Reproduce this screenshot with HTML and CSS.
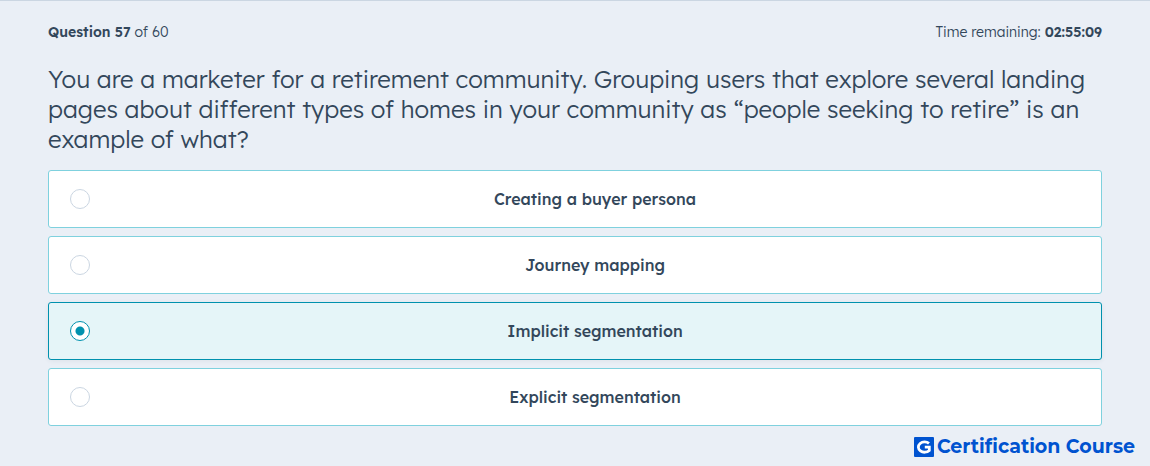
FILE: index.html
```html
<!DOCTYPE html>
<html lang="en">
	<head>
		<meta charset="UTF-8">
		<meta name="viewport" content="width=device-width, initial-scale=1.0">
		<title>Question 57 of 60</title>
		<link rel="stylesheet" href="styles.css">
	</head>
	<body>
		<form class="quiz">
			<header class="quiz-status">
				<div><strong>Question 57</strong> of 60</div>
				<div>Time remaining: <strong>02:55:09</strong></div>
			</header>

			<fieldset class="question">
				<legend class="question-text">You are a marketer for a retirement community. Grouping users that explore several landing pages about different types of homes in your community as “people seeking to retire” is an example of what?</legend>

				<div class="answers">
					<label class="answer">
						<input type="radio" name="answer" value="persona">
						<span>Creating a buyer persona</span>
					</label>
					<label class="answer">
						<input type="radio" name="answer" value="journey">
						<span>Journey mapping</span>
					</label>
					<label class="answer">
						<input type="radio" name="answer" value="implicit" checked>
						<span>Implicit segmentation</span>
					</label>
					<label class="answer">
						<input type="radio" name="answer" value="explicit">
						<span>Explicit segmentation</span>
					</label>
				</div>
			</fieldset>
		</form>

		<footer class="brand">
			<svg class="brand-logo" viewBox="0 0 20 20" aria-hidden="true">
				<rect width="20" height="20" rx="1" fill="#0053d0"/>
				<path d="M15 6.4A6.2 5.2 0 1 0 15.3 13.4V10.2H10.8" fill="none" stroke="#fff" stroke-width="2.8"/>
			</svg>
			<span>Certification Course</span>
		</footer>
	</body>
</html>
```

FILE: styles.css
```css
* {
	box-sizing: border-box;
}

body {
	margin: 0;
	border-top: 1px solid #cbd6e2;
	background: #eaeff6;
	color: #33475b;
	font-family: "Lexend Deca", Inter, sans-serif;
}

.quiz {
	padding: 19px 48px 0;
}

.quiz-status {
	display: flex;
	justify-content: space-between;
	font-size: 14px;
	font-weight: 300;
	line-height: 24px;
}

.quiz-status strong {
	font-weight: 600;
}

.question {
	margin: 0;
	padding: 0;
	border: 0;
	min-width: 0;
}

.question-text {
	padding: 20px 0 16px;
	font-size: 24px;
	font-weight: 300;
	line-height: 30px;
}

.answers {
	display: grid;
	gap: 8px;
}

.answer {
	display: flex;
	align-items: center;
	gap: 20px;
	min-height: 58px;
	padding: 0 21px;
	border: 1px solid #7fd1de;
	border-radius: 3px;
	background: #fff;
	font-size: 16px;
	font-weight: 500;
	line-height: 24px;
	cursor: pointer;
}

.answer span {
	flex: 1;
	text-align: center;
}

.answer input {
	appearance: none;
	width: 20px;
	height: 20px;
	margin: 0;
	border: 1px solid #cbd6e2;
	border-radius: 50%;
	background: #fff;
}

/* Selected answer */
.answer:has(input:checked) {
	border-color: #0091ae;
	background: #e5f5f8;
	box-shadow: 0 1px 5px rgba(0, 0, 0, 0.06);
}

.answer input:checked {
	border-color: #0091ae;
	background: radial-gradient(circle, #0091ae 4px, #fff 5px);
}

.brand {
	display: flex;
	justify-content: flex-end;
	align-items: center;
	gap: 3px;
	padding: 9px 15px 7px;
	color: #0053d0;
	font-family: Montserrat, Inter, sans-serif;
	font-size: 19px;
	font-weight: 700;
	line-height: 24px;
}

.brand-logo {
	width: 20px;
	height: 20px;
}
```
